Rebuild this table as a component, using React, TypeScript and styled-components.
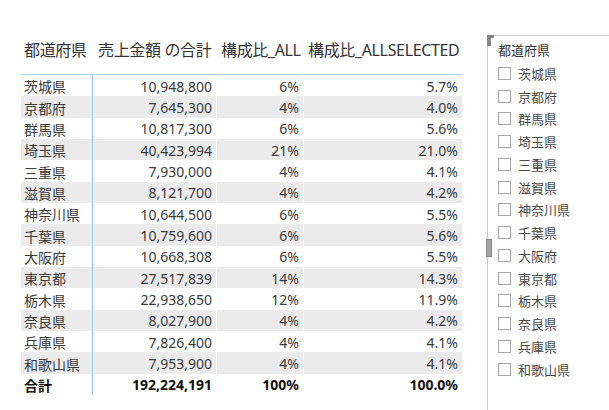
import React from "react";
import styled, { createGlobalStyle } from "styled-components";

const Global = createGlobalStyle`
  html, body { margin: 0; padding: 0; background: #ffffff; }
  body { width: 609px; height: 410px; overflow: hidden; font-family: "Noto Sans", "Noto Sans CJK JP", sans-serif; }
`;

type Row = { name: string; sales: string; all: string; sel: string };

const rows: Row[] = [
  { name: "茨城県", sales: "10,948,800", all: "6%", sel: "5.7%" },
  { name: "京都府", sales: "7,645,300", all: "4%", sel: "4.0%" },
  { name: "群馬県", sales: "10,817,300", all: "6%", sel: "5.6%" },
  { name: "埼玉県", sales: "40,423,994", all: "21%", sel: "21.0%" },
  { name: "三重県", sales: "7,930,000", all: "4%", sel: "4.1%" },
  { name: "滋賀県", sales: "8,121,700", all: "4%", sel: "4.2%" },
  { name: "神奈川県", sales: "10,644,500", all: "6%", sel: "5.5%" },
  { name: "千葉県", sales: "10,759,600", all: "6%", sel: "5.6%" },
  { name: "大阪府", sales: "10,668,308", all: "6%", sel: "5.5%" },
  { name: "東京都", sales: "27,517,839", all: "14%", sel: "14.3%" },
  { name: "栃木県", sales: "22,938,650", all: "12%", sel: "11.9%" },
  { name: "奈良県", sales: "8,027,900", all: "4%", sel: "4.2%" },
  { name: "兵庫県", sales: "7,826,400", all: "4%", sel: "4.1%" },
  { name: "和歌山県", sales: "7,953,900", all: "4%", sel: "4.1%" },
];

const Page = styled.div`
  display: flex;
  width: 609px;
  height: 410px;
`;

const TableArea = styled.div`
  padding: 37px 0 0 21px;
  width: 467px;
  box-sizing: border-box;
`;

const Grid = styled.div`
  display: grid;
  grid-template-columns: 72px 122px 86px 158px;
  column-gap: 1px;
  grid-template-rows: 38px repeat(14, 21.35px) 21px;
  color: #333333;
`;

const HeadCell = styled.div<{ $first?: boolean }>`
  font-size: 16px;
  line-height: 20px;
  padding: 3px 0 0 ${(p) => (p.$first ? 3 : 4)}px;
  border-bottom: 1px solid #a9d2f5;
  white-space: nowrap;
  box-sizing: border-box;
  color: #333333;
  letter-spacing: -0.35px;
`;

const Cell = styled.div<{ $shade?: boolean; $num?: boolean; $first?: boolean; $bold?: boolean }>`
  background: ${(p) => (p.$shade ? "#ebebeb" : "#ffffff")};
  font-size: 14px;
  font-weight: ${(p) => (p.$bold ? 700 : 400)};
  display: flex;
  align-items: center;
  justify-content: ${(p) => (p.$num ? "flex-end" : "flex-start")};
  padding: 1px ${(p) => (p.$num ? 4 : 0)}px 0 ${(p) => (p.$num ? 0 : 3)}px;
  border-right: ${(p) => (p.$first ? "1px solid #8fc3f0" : "none")};
  white-space: nowrap;
  box-sizing: border-box;
  color: ${(p) => (p.$bold ? "#111111" : "#3a3a3a")};
`;

const Slicer = styled.div`
  position: relative;
  margin-top: 35px;
  margin-left: 20px;
  flex: 1;
  border-left: 1px solid #c8c8c8;
  border-top: 1px solid #c8c8c8;
  padding: 5px 0 0 10px;
  box-sizing: border-box;
  display: flex;
  flex-direction: column;
`;

const Corner = styled.div`
  position: absolute;
  left: -1px;
  top: -1px;
  width: 3px;
  height: 8px;
  border-top: 3px solid #858585;
  border-left: 4px solid #858585;
`;

const Handle = styled.div`
  position: absolute;
  left: -2px;
  top: 203px;
  width: 4px;
  height: 16px;
  background: #a6a6a6;
  border: 1px solid #8a8a8a;
`;

const SlicerTitle = styled.div`
  font-family: "Noto Sans CJK JP", sans-serif;
  font-size: 13px;
  line-height: 18px;
  color: #333333;
  height: 21px;
`;

const Item = styled.div`
  display: flex;
  align-items: center;
  gap: 7px;
  height: 22.75px;
  font-family: "Noto Sans CJK JP", sans-serif;
  font-size: 13px;
  color: #4a4a4a;
`;

const Box = styled.span`
  width: 11px;
  height: 11px;
  border: 1px solid #a6a6a6;
  background: #fff;
  flex: none;
`;

export default function App() {
  return (
    <>
      <Global />
      <Page>
        <TableArea>
          <Grid>
            <HeadCell $first>都道府県</HeadCell>
            <HeadCell>売上金額 の合計</HeadCell>
            <HeadCell>構成比_ALL</HeadCell>
            <HeadCell>構成比_ALLSELECTED</HeadCell>
            {rows.map((r, i) => {
              const shade = i % 2 === 1;
              return (
                <React.Fragment key={r.name}>
                  <Cell $shade={shade} $first>{r.name}</Cell>
                  <Cell $shade={shade} $num>{r.sales}</Cell>
                  <Cell $shade={shade} $num>{r.all}</Cell>
                  <Cell $shade={shade} $num>{r.sel}</Cell>
                </React.Fragment>
              );
            })}
            <Cell $first $bold>合計</Cell>
            <Cell $num $bold>192,224,191</Cell>
            <Cell $num $bold>100%</Cell>
            <Cell $num $bold>100.0%</Cell>
          </Grid>
        </TableArea>
        <Slicer>
          <Corner />
          <Handle />
          <SlicerTitle>都道府県</SlicerTitle>
          {rows.map((r) => (
            <Item key={r.name}>
              <Box />
              {r.name}
            </Item>
          ))}
        </Slicer>
      </Page>
    </>
  );
}
